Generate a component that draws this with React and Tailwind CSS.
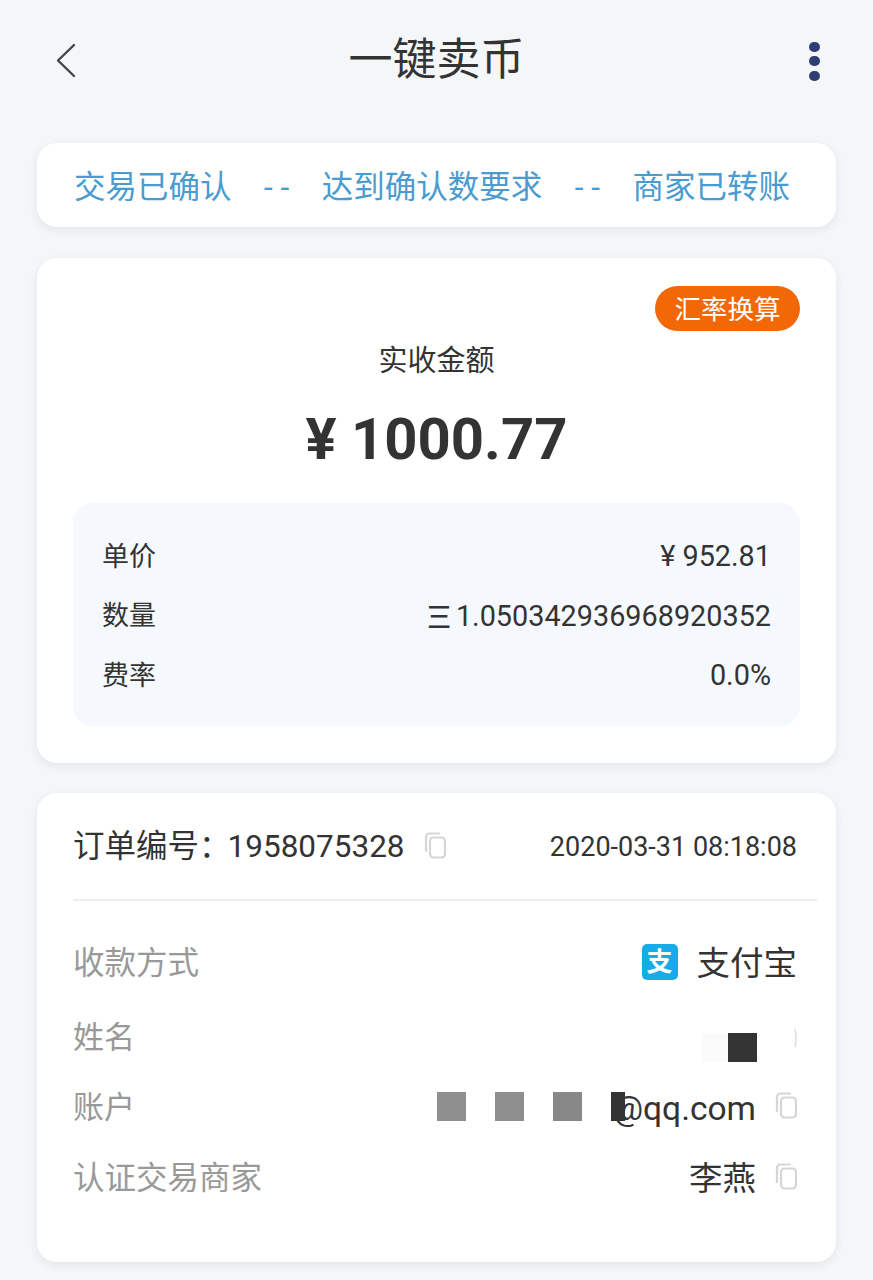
import React from "react";

const CopyIcon = ({ className = "" }) => (
  <svg viewBox="0 0 22 27" className={`w-[22px] h-[27px] shrink-0 ${className}`} fill="none" stroke="#d6d6d6" strokeWidth="2.2">
    <path d="M2 19V5a3.5 3.5 0 0 1 3.5-3.5H15" strokeLinecap="round" />
    <rect x="6" y="5.5" width="15" height="20" rx="3.5" />
  </svg>
);

const priceRows = [
  { label: "单价", value: "¥ 952.81" },
  { label: "数量", value: "1.050342936968920352", unit: "Ξ" },
  { label: "费率", value: "0.0%" },
];

const Square = ({ className = "" }) => <span className={`block w-[29px] h-[29px] shrink-0 ${className}`} />;

export default function App() {
  return (
    <div className="w-[873px] h-[1280px] overflow-hidden bg-[#f4f6f8] text-[#333333] font-['Roboto','Noto_Sans_CJK_SC',sans-serif]">
      <header className="h-[143px] pb-[23px] pl-[55px] pr-[53px] flex items-center justify-between">
        <svg viewBox="0 0 21 35" className="w-[21px] h-[35px]" fill="none" stroke="#444444" strokeWidth="2.4" strokeLinecap="round" strokeLinejoin="round">
          <path d="M19 2 3 17.5 19 33" />
        </svg>
        <h1 className="text-[44px] leading-none font-normal ml-[-12px]">一键卖币</h1>
        <div className="mt-[2px] flex flex-col gap-[4.5px]">
          <span className="w-[11px] h-[10px] rounded-full bg-[#2f3f73]" />
          <span className="w-[11px] h-[10px] rounded-full bg-[#2f3f73]" />
          <span className="w-[11px] h-[10px] rounded-full bg-[#2f3f73]" />
        </div>
      </header>

      <div className="mx-[37px] flex flex-col">
        <section className="h-[84px] rounded-[20px] bg-white shadow-[0_3px_10px_rgba(40,50,70,0.08)] pl-[37px] pr-[46px] pt-[5px] flex items-center justify-between text-[31.5px] text-[#4a9bd0] leading-none">
          <span>交易已确认</span>
          <span>- -</span>
          <span>达到确认数要求</span>
          <span>- -</span>
          <span>商家已转账</span>
        </section>

        <section className="mt-[31px] h-[505px] rounded-[20px] bg-white shadow-[0_3px_10px_rgba(40,50,70,0.08)] px-[36px] pt-[28px] flex flex-col">
          <div className="self-end h-[45px] w-[145px] pt-[3px] rounded-full bg-[#f26706] text-white text-[26.5px] leading-none flex items-center justify-center">
            汇率换算
          </div>
          <p className="text-center text-[29px] leading-[60px]">实收金额</p>
          <p className="mt-[14px] text-center text-[58px] font-bold leading-[68px]">¥ 1000.77</p>
          <div className="mt-[30px] h-[223px] rounded-[20px] bg-[#f5f9fd] pl-[29px] pr-[29px] pt-[39px] flex flex-col gap-[29.5px]">
            {priceRows.map((row) => (
              <div key={row.label} className="flex items-center justify-between h-[30px] text-[28.8px]">
                <span className="text-[27px]">{row.label}</span>
                <span className="flex items-center gap-[8px]">
                  {row.unit && <span className="inline-block scale-x-[1.4] text-[32px] leading-none">{row.unit}</span>}
                  {row.value}
                </span>
              </div>
            ))}
          </div>
        </section>

        <section className="mt-[30px] h-[469px] rounded-[20px] bg-white shadow-[0_3px_10px_rgba(40,50,70,0.08)] pl-[36px] pr-[19px] flex flex-col">
          <div className="h-[108px] pt-[2px] flex items-center border-b-2 border-[#eeeeee] pr-[20px]">
            <span className="text-[31.5px]">订单编号：</span>
            <span className="text-[31.5px] ml-[-3px]">1958075328</span>
            <CopyIcon className="ml-[19px] mb-[4px]" />
            <span className="ml-auto text-[27px]">2020-03-31 08:18:08</span>
          </div>
          <div className="pr-[20px] flex flex-col text-[33.5px]">
            <div className="h-[40px] mt-[43px] flex items-center justify-between">
              <span className="text-[31.5px] text-[#999999]">收款方式</span>
              <span className="flex items-center gap-[19px]">
                <span className="w-[36px] h-[36px] mb-[5px] rounded-[5px] bg-[#16ace8] text-white text-[26px] leading-none font-bold flex items-center justify-center">支</span>
                支付宝
              </span>
            </div>
            <div className="h-[40px] mt-[34px] flex items-center justify-between">
              <span className="text-[31px] text-[#999999]">姓名</span>
              <span className="self-start flex items-start">
                <span className="block w-[27px] h-[29px] mt-[15px] bg-[#fbfbfb]" />
                <Square className="bg-[#333333] mt-[15px] mr-[37px]" />
                <svg viewBox="0 0 3 20" className="w-[3px] h-[20px] mt-[10px]" fill="none" stroke="#dddddd" strokeWidth="1.5">
                  <path d="M1 1c1.2 6 1.2 12 0 18" />
                </svg>
              </span>
            </div>
            <div className="h-[40px] mt-[30px] flex items-center justify-between">
              <span className="text-[31px] text-[#999999]">账户</span>
              <span className="flex items-center">
                <Square className="bg-[#8f8f8f] mr-[29px] mb-[4px]" />
                <Square className="bg-[#8f8f8f] mr-[29px] mb-[4px]" />
                <Square className="bg-[#888888] mr-[29px] mb-[4px]" />
                <span className="block w-[14px] h-[29px] bg-[#333333] mr-[-12px] mb-[4px]" />
                <span className="mt-[2px]">@qq.com</span>
                <CopyIcon className="ml-[19px] mb-[6px]" />
              </span>
            </div>
            <div className="h-[40px] mt-[31px] flex items-center justify-between">
              <span className="text-[31.5px] text-[#999999]">认证交易商家</span>
              <span className="flex items-center">
                李燕
                <CopyIcon className="ml-[19px] mb-[6px]" />
              </span>
            </div>
          </div>
        </section>
      </div>
    </div>
  );
}
